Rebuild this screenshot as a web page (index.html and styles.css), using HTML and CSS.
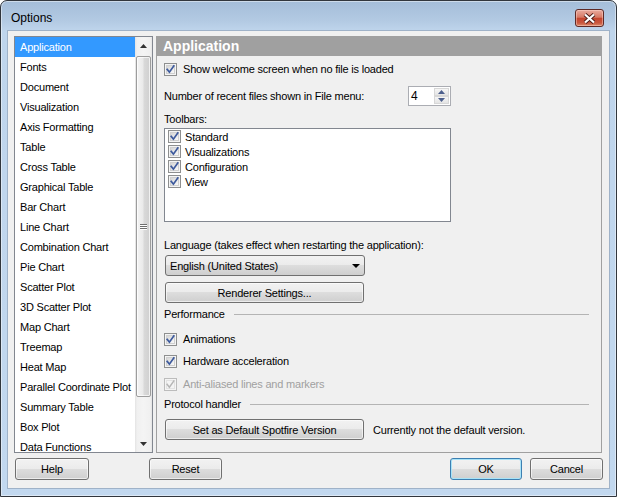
FILE: index.html
```html
<!DOCTYPE html>
<html>
<head>
<meta charset="utf-8">
<link rel="stylesheet" href="styles.css">
</head>
<body>
<svg class="defs" width="0" height="0">
  <defs>
    <linearGradient id="cbg" x1="0" y1="0" x2="1" y2="1">
      <stop offset="0" stop-color="#d4d4d4"/>
      <stop offset="1" stop-color="#fbfbfb"/>
    </linearGradient>
    <symbol id="chk" viewBox="0 0 13 13">
      <rect x="0.5" y="0.5" width="12" height="12" fill="#f4f4f4" stroke="#8e8f8f"/>
      <rect x="2.5" y="2.5" width="8" height="8" fill="url(#cbg)" stroke="#d0d0d0"/>
      <path d="M3.2 6.4 L5.4 9.2 L9.8 3" fill="none" stroke="#3d5a9d" stroke-width="1.7" stroke-linecap="square"/>
    </symbol>
    <symbol id="chkd" viewBox="0 0 13 13">
      <rect x="0.5" y="0.5" width="12" height="12" fill="#f4f4f4" stroke="#bcbcbc"/>
      <rect x="2.5" y="2.5" width="8" height="8" fill="#f4f4f4" stroke="#e2e2e2"/>
      <path d="M3.2 6.4 L5.4 9.2 L9.8 3" fill="none" stroke="#b5b5b5" stroke-width="1.5" stroke-linecap="square"/>
    </symbol>
  </defs>
</svg>
<div class="window">
  <div class="titlebar">
    <span class="title">Options</span>
    <span class="close">
      <svg width="13" height="11" viewBox="0 0 13 11"><path d="M2 1.5 L11 9.5 M11 1.5 L2 9.5" stroke="#4a1c18" stroke-width="4" fill="none"/><path d="M2 1.5 L11 9.5 M11 1.5 L2 9.5" stroke="#fff" stroke-width="2.2" fill="none"/></svg>
    </span>
  </div>
  <div class="client">
    <div class="main">
      <div class="list">
        <ul class="items">
          <li class="selected">Application</li>
          <li>Fonts</li>
          <li>Document</li>
          <li>Visualization</li>
          <li>Axis Formatting</li>
          <li>Table</li>
          <li>Cross Table</li>
          <li>Graphical Table</li>
          <li>Bar Chart</li>
          <li>Line Chart</li>
          <li>Combination Chart</li>
          <li>Pie Chart</li>
          <li>Scatter Plot</li>
          <li>3D Scatter Plot</li>
          <li>Map Chart</li>
          <li>Treemap</li>
          <li>Heat Map</li>
          <li>Parallel Coordinate Plot</li>
          <li>Summary Table</li>
          <li>Box Plot</li>
          <li>Data Functions</li>
        </ul>
        <div class="scrollbar">
          <div class="sb-btn"><svg width="7" height="4" viewBox="0 0 7 4"><path d="M0 4 L3.5 0 L7 4 Z" fill="#333"/></svg></div>
          <div class="sb-track">
            <div class="sb-thumb">
              <svg width="7" height="6" viewBox="0 0 7 6"><path d="M0 0.5 H7 M0 2.5 H7 M0 4.5 H7" stroke="#6f6f6f" stroke-width="1"/><path d="M0 1.5 H7 M0 3.5 H7 M0 5.5 H7" stroke="#fff" stroke-width="1"/></svg>
            </div>
          </div>
          <div class="sb-btn"><svg width="7" height="4" viewBox="0 0 7 4"><path d="M0 0 L3.5 4 L7 0 Z" fill="#333"/></svg></div>
        </div>
      </div>
      <div class="panel">
        <div class="panel-head">Application</div>
        <div class="panel-body">
          <label class="check r-welcome"><svg class="cb"><use href="#chk"/></svg><span>Show welcome screen when no file is loaded</span></label>

          <div class="recent">
            <span>Number of recent files shown in File menu:</span>
            <div class="spinner">
              <span class="spin-val">4</span>
              <div class="spin-btns">
                <span class="spin-btn"><svg width="7" height="4" viewBox="0 0 7 4"><path d="M0 4 L3.5 0 L7 4 Z" fill="#4c5f8c"/></svg></span>
                <span class="spin-btn"><svg width="7" height="4" viewBox="0 0 7 4"><path d="M0 0 L3.5 4 L7 0 Z" fill="#4c5f8c"/></svg></span>
              </div>
            </div>
          </div>

          <div class="label r-toolbars">Toolbars:</div>
          <div class="toolbox">
            <label class="titem"><svg class="cb"><use href="#chk"/></svg><span>Standard</span></label>
            <label class="titem"><svg class="cb"><use href="#chk"/></svg><span>Visualizations</span></label>
            <label class="titem"><svg class="cb"><use href="#chk"/></svg><span>Configuration</span></label>
            <label class="titem"><svg class="cb"><use href="#chk"/></svg><span>View</span></label>
          </div>

          <div class="label r-lang">Language (takes effect when restarting the application):</div>
          <div class="combo">
            <span>English (United States)</span>
            <svg width="8" height="4" viewBox="0 0 8 4"><path d="M0 0 L8 0 L4 4 Z" fill="#000"/></svg>
          </div>
          <div class="btn wide r-renderer">Renderer Settings...</div>

          <div class="group r-perf"><span>Performance</span><span class="rule"></span></div>
          <label class="check r-anim"><svg class="cb"><use href="#chk"/></svg><span>Animations</span></label>
          <label class="check r-hw"><svg class="cb"><use href="#chk"/></svg><span>Hardware acceleration</span></label>
          <label class="check disabled r-aa"><svg class="cb"><use href="#chkd"/></svg><span>Anti-aliased lines and markers</span></label>
          <div class="group r-proto"><span>Protocol handler</span><span class="rule"></span></div>
          <div class="default-row">
            <div class="btn wide">Set as Default Spotfire Version</div>
            <span class="note">Currently not the default version.</span>
          </div>
        </div>
      </div>
    </div>
    <div class="footer">
      <div class="btn foot help">Help</div>
      <div class="btn foot reset">Reset</div>
      <div class="spacer"></div>
      <div class="btn foot ok">OK</div>
      <div class="btn foot cancel">Cancel</div>
    </div>
  </div>
</div>
</body>
</html>
```

FILE: styles.css
```css
* { box-sizing: border-box; }
html, body { margin: 0; padding: 0; }
body {
  width: 617px;
  height: 497px;
  overflow: hidden;
  background: #ffffff;
  font-family: "Liberation Sans", Arial, sans-serif;
  font-size: 11px;
  letter-spacing: -0.2px;
  color: #000;
}
.defs { position: absolute; width: 0; height: 0; overflow: hidden; }

.window {
  width: 617px;
  height: 497px;
  border: 1px solid #31363d;
  border-radius: 7px 7px 0 0;
  background: linear-gradient(#a4bdd9 0px, #b3cae3 20px, #bfd5ec 30px, #c2d8ef 100%);
  box-shadow: inset 0 0 0 1px rgba(255, 255, 255, 0.45);
  display: flex;
  flex-direction: column;
}

.titlebar {
  height: 29px;
  flex: none;
  display: flex;
  align-items: flex-start;
  justify-content: space-between;
  padding: 8px 12px 0 10px;
}
.title {
  font-size: 12px;
  letter-spacing: 0;
  line-height: 18px;
  color: #000;
}
.close {
  width: 29px;
  height: 18px;
  border: 1px solid #5e2a26;
  border-radius: 3px;
  background: linear-gradient(#e9aa9e 0%, #d77a66 45%, #c4452f 52%, #c9573e 80%, #dc8a6a 100%);
  box-shadow: inset 0 0 0 1px rgba(255, 220, 210, 0.45);
  display: flex;
  align-items: center;
  justify-content: center;
}

.client {
  flex: 1;
  margin: 0 6px 7px 6px;
  border: 1px solid #9fb2c8;
  background: #f0f0f0;
  padding: 5px 6px 0 6px;
  display: flex;
  flex-direction: column;
}

.main {
  height: 417px;
  flex: none;
  display: flex;
  gap: 3px;
}

/* left list */
.list {
  width: 139px;
  height: 417px;
  border: 1px solid #828790;
  background: #fff;
  display: flex;
}
.items {
  list-style: none;
  margin: 0;
  padding: 0;
  flex: 1;
  overflow: hidden;
}
.items li {
  height: 20px;
  line-height: 20px;
  padding-left: 5px;
  white-space: nowrap;
}
.items li.selected {
  background: #3399ff;
  color: #fff;
}
.scrollbar {
  width: 17px;
  display: flex;
  flex-direction: column;
  background: linear-gradient(90deg, #e3e3e3 0, #f0f0f0 2px, #f4f4f4 50%, #f0f0f0 90%, #e3e3e3 100%);
}
.sb-btn {
  height: 17px;
  flex: none;
  display: flex;
  align-items: center;
  justify-content: center;
}
.sb-track {
  flex: 1;
  padding: 2px 1px 38px 1px;
  display: flex;
}
.sb-thumb {
  flex: 1;
  border: 1px solid #9d9d9d;
  border-radius: 2px;
  background: linear-gradient(90deg, #f4f4f4 0%, #eaeaea 45%, #d9d9d9 55%, #cfcfcf 100%);
  box-shadow: inset 0 0 0 1px rgba(255, 255, 255, 0.7);
  display: flex;
  align-items: center;
  justify-content: center;
}

/* right panel */
.panel {
  width: 446px;
  height: 417px;
  border: 1px solid #a0a0a0;
  display: flex;
  flex-direction: column;
}
.panel-head {
  height: 19px;
  flex: none;
  background: #a0a0a0;
  color: #fff;
  font-weight: bold;
  font-size: 14px;
  letter-spacing: 0;
  line-height: 19px;
  padding-left: 6px;
}
.panel-body {
  flex: 1;
  padding-left: 7px;
  display: flex;
  flex-direction: column;
  align-items: flex-start;
}

.cb {
  width: 13px;
  height: 13px;
  flex: none;
  display: block;
}
.check {
  height: 13px;
  display: flex;
  align-items: center;
  gap: 6px;
  line-height: 13px;
}
.check.disabled { color: #a0a0a0; }
.r-welcome { margin-top: 7px; }
.r-anim { margin-top: 12px; }
.r-hw { margin-top: 9px; }
.r-aa { margin-top: 10px; }

.recent {
  margin-top: 10px;
  width: 287px;
  height: 20px;
  display: flex;
  align-items: center;
  justify-content: space-between;
}
.spinner {
  width: 43px;
  height: 20px;
  border: 1px solid #abadb3;
  background: #fff;
  display: flex;
}
.spin-val {
  flex: 1;
  padding-left: 2px;
  line-height: 18px;
  font-size: 12px;
}
.spin-btns {
  width: 17px;
  display: flex;
  flex-direction: column;
  padding: 1px;
}
.spin-btn {
  flex: 1;
  border: 1px solid #d7d7d7;
  background: linear-gradient(#f6f6f6, #e4e4e4);
  display: flex;
  align-items: center;
  justify-content: center;
}

.label { line-height: 13px; height: 13px; }
.r-toolbars { margin-top: 7px; }
.r-lang { margin-top: 17px; }

.toolbox {
  margin-top: 2px;
  width: 287px;
  height: 94px;
  border: 1px solid #828790;
  background: #fff;
  padding: 0 0 0 3px;
}
.titem {
  height: 15px;
  display: flex;
  align-items: center;
  gap: 4px;
}

.combo {
  margin-top: 3px;
  margin-left: 1px;
  width: 200px;
  height: 21px;
  border: 1px solid #707070;
  border-radius: 3px;
  background: linear-gradient(#f2f2f2 0%, #ebebeb 50%, #dddddd 50%, #cfcfcf 100%);
  display: flex;
  align-items: center;
  justify-content: space-between;
  padding: 0 4px 0 4px;
}

.btn {
  height: 21px;
  border: 1px solid #707070;
  border-radius: 3px;
  background: linear-gradient(#f2f2f2 0%, #ebebeb 50%, #dddddd 50%, #cfcfcf 100%);
  box-shadow: inset 0 0 0 1px rgba(255, 255, 255, 0.6);
  display: flex;
  align-items: center;
  justify-content: center;
  white-space: nowrap;
}
.btn.wide { width: 199px; margin-left: 1px; }
.r-renderer { margin-top: 6px; }

.group {
  height: 13px;
  line-height: 13px;
  width: 425px;
  display: flex;
  align-items: center;
  gap: 9px;
}
.group .rule {
  flex: 1;
  height: 1px;
  background: #b4b4b4;
}
.r-perf { margin-top: 5px; }
.r-proto { margin-top: 7px; }

.default-row {
  margin-top: 8px;
  display: flex;
  align-items: center;
  gap: 9px;
}

.footer {
  margin-top: 5px;
  height: 22px;
  display: flex;
  padding-left: 1px;
}
.btn.foot { height: 22px; width: 73px; }
.help { width: 74px !important; }
.reset { margin-left: 60px; }
.spacer { flex: 1; }
.ok {
  width: 72px !important;
  border-color: #3c7fb1;
  box-shadow: inset 0 0 0 1px #a8e3f8;
  margin-right: 8px;
}
```
